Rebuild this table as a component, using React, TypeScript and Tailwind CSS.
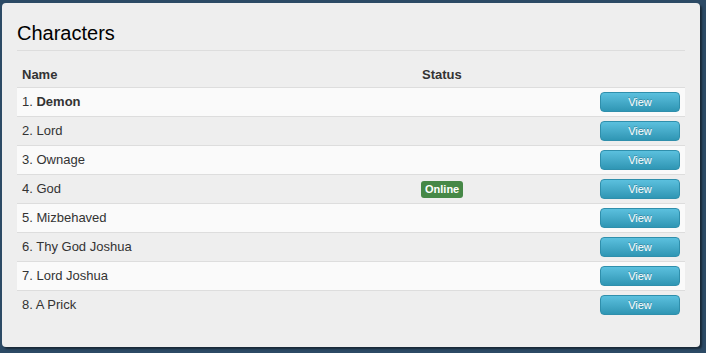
const characters = [
  { name: "Demon", main: true },
  { name: "Lord" },
  { name: "Ownage" },
  { name: "God", online: true },
  { name: "Mizbehaved" },
  { name: "Thy God Joshua" },
  { name: "Lord Joshua" },
  { name: "A Prick" },
];

export default function App() {
  return (
    <div className="h-[353px] w-[706px] bg-[#2c4a65] pl-[2px] pt-[3px] font-['Liberation_Sans',Arial,sans-serif] text-[#333333]">
      <div className="h-[344px] w-[698px] rounded-[4px] bg-[#eeeeee] px-[15px] pt-[18px] shadow-[2px_2px_2px_rgba(0,0,0,0.45)]">
        {/* heading */}
        <h1 className="h-[30px] border-b border-[#dddddd] text-[20px] leading-[24px] text-black">
          Characters
        </h1>

        {/* table header */}
        <div className="grid h-[36px] grid-cols-[400px_1fr_90px] items-end pb-[2px] text-[13px] font-bold leading-[20px]">
          <div className="px-[5px]">Name</div>
          <div className="px-[5px]">Status</div>
          <div />
        </div>

        {/* rows */}
        <div>
          {characters.map((c, i) => (
            <div
              key={c.name}
              className={`grid h-[29px] grid-cols-[400px_1fr_90px] items-center border-t border-[#dddddd] text-[13px] ${
                i % 2 === 0 ? "bg-[#fafafa]" : ""
              }`}
            >
              <div className="px-[5px]">
                {i + 1}. {c.main ? <b>{c.name}</b> : c.name}
              </div>
              <div className="px-[4px]">
                {c.online && (
                  <span className="inline-flex h-[17px] items-center rounded-[3px] bg-[#468847] px-[4px] text-[11px] font-bold text-white">
                    Online
                  </span>
                )}
              </div>
              <div className="flex justify-end pr-[5px]">
                <button className="flex h-[20px] w-[80px] items-center justify-center rounded-[4px] border border-[#2f8fac] bg-gradient-to-b from-[#5bc0de] to-[#2f96b4] text-[11px] text-white [text-shadow:0_-1px_0_rgba(0,0,0,0.25)]">
                  View
                </button>
              </div>
            </div>
          ))}
        </div>
      </div>
    </div>
  );
}
